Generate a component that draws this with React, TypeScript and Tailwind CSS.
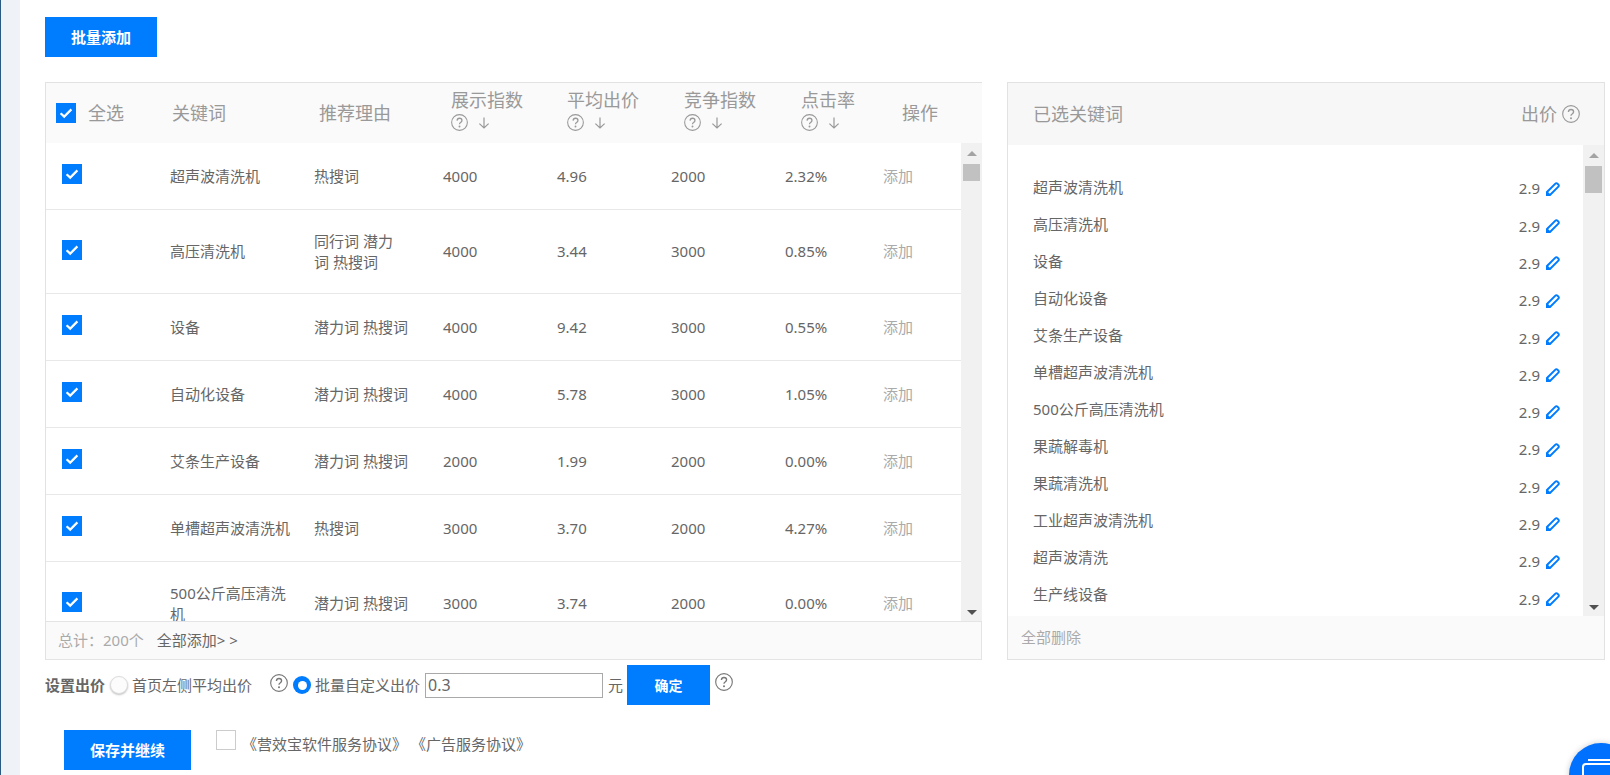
const FONT = "font-['Noto_Sans','Noto_Sans_CJK_SC','Liberation_Sans',sans-serif]";

function Check({ className }: { className: string }) {
  return (
    <span className={`flex h-5 w-5 items-center justify-center bg-[#007cff] ${className}`}>
      <svg width="14" height="12" viewBox="0 0 14 12" fill="none">
        <path d="M1.6 6.2 5.2 9.6 12.4 2.4" stroke="#fff" strokeWidth="2.2" />
      </svg>
    </span>
  );
}

function Help({ size = 17, color = "#999" }: { size?: number; color?: string }) {
  return (
    <svg width={size} height={size} viewBox="0 0 16 16" fill="none" className="shrink-0">
      <circle cx="8" cy="8" r="7.4" stroke={color} strokeWidth="1" />
      <path d="M5.7 6.2c.1-1.4 1-2.2 2.3-2.2 1.4 0 2.3.8 2.3 2 0 1-.6 1.5-1.3 2-.6.4-1 .8-1 1.6" stroke={color} strokeWidth="1.2" />
      <circle cx="8" cy="11.8" r=".9" fill={color} />
    </svg>
  );
}

function Down() {
  return (
    <svg width="12" height="12" viewBox="0 0 12 12" fill="none" className="shrink-0">
      <path d="M6 0.5V11M1.4 6.6 6 11 10.6 6.6" stroke="#999" strokeWidth="1.2" />
    </svg>
  );
}

function Pencil() {
  return (
    <svg width="14" height="14" viewBox="0 0 14 14" fill="none" className="shrink-0">
      <path d="M1 10 9.4 1.6a1.4 1.4 0 0 1 2 0l1 1a1.4 1.4 0 0 1 0 2L4 13H1Z" stroke="#007cff" strokeWidth="2" />
      <path d="M1.5 10.5 3.5 12.5" stroke="#007cff" strokeWidth="1.5" />
    </svg>
  );
}

function Scrollbar({ thumb, width }: { thumb: string; width: string }) {
  return (
    <div className={`relative flex shrink-0 flex-col items-center bg-[#f1f1f1] ${width}`}>
      <span className="mt-[8px] h-0 w-0 border-x-[5px] border-b-[5px] border-x-transparent border-b-[#a3a3a3]" />
      <span className={`mt-[8px] w-[17px] bg-[#c1c1c1] ${thumb}`} />
      <span className="mb-[6px] mt-auto h-0 w-0 border-x-[5px] border-t-[5px] border-x-transparent border-t-[#505050]" />
    </div>
  );
}

const rows = [
  { kw: ["超声波清洗机"], why: ["热搜词"], a: "4000", b: "4.96", c: "2000", d: "2.32%", h: "h-[67px]" },
  { kw: ["高压清洗机"], why: ["同行词 潜力", "词 热搜词"], a: "4000", b: "3.44", c: "3000", d: "0.85%", h: "h-[84px]" },
  { kw: ["设备"], why: ["潜力词 热搜词"], a: "4000", b: "9.42", c: "3000", d: "0.55%", h: "h-[67px]" },
  { kw: ["自动化设备"], why: ["潜力词 热搜词"], a: "4000", b: "5.78", c: "3000", d: "1.05%", h: "h-[67px]" },
  { kw: ["艾条生产设备"], why: ["潜力词 热搜词"], a: "2000", b: "1.99", c: "2000", d: "0.00%", h: "h-[67px]" },
  { kw: ["单槽超声波清洗机"], why: ["热搜词"], a: "3000", b: "3.70", c: "2000", d: "4.27%", h: "h-[67px]" },
  { kw: ["500公斤高压清洗", "机"], why: ["潜力词 热搜词"], a: "3000", b: "3.74", c: "2000", d: "0.00%", h: "h-[84px]" },
];

const selected = ["超声波清洗机", "高压清洗机", "设备", "自动化设备", "艾条生产设备", "单槽超声波清洗机", "500公斤高压清洗机", "果蔬解毒机", "果蔬清洗机", "工业超声波清洗机", "超声波清洗", "生产线设备"];

function Sortable({ label, className }: { label: string; className: string }) {
  return (
    <div className={`mb-[8px] flex flex-col gap-[3px] ${className}`}>
      <span className="leading-[24px]">{label}</span>
      <span className="flex h-4 items-center gap-[10px]">
        <Help />
        <Down />
      </span>
    </div>
  );
}

export default function App() {
  return (
    <div className={`flex h-[775px] w-[1610px] overflow-hidden bg-white text-[15px] text-[#666] ${FONT}`}>
      <div className="w-5 shrink-0 border-l border-l-[#2a5a84] bg-[#eff2f7]" />
      <main className="relative flex-1 pl-[25px] pr-[5px] pt-[17px]">
        <button className="h-10 w-[112px] bg-[#007cff] text-[15px] font-bold text-white">批量添加</button>

        <div className="mt-[25px] flex h-[578px] items-start justify-between">
          <section className="flex h-[578px] w-[937px] flex-col border-l border-t border-[#e2e2e2]">
            <header className="flex h-[60px] shrink-0 items-center bg-[#fafafa] text-[18px] text-[#999]">
              <Check className="ml-[10px]" />
              <span className="ml-3 w-[84px]">全选</span>
              <span className="w-[147px]">关键词</span>
              <span className="w-[132px]">推荐理由</span>
              <Sortable label="展示指数" className="w-[116px]" />
              <Sortable label="平均出价" className="w-[117px]" />
              <Sortable label="竞争指数" className="w-[117px]" />
              <Sortable label="点击率" className="w-[101px]" />
              <span>操作</span>
            </header>
            <div className="flex min-h-0 flex-1">
              <div className="min-w-0 flex-1 overflow-hidden">
                {rows.map((r, i) => (
                  <div key={i} className={`flex shrink-0 items-center border-b border-[#e8e8e8] ${r.h}`}>
                    <Check className="ml-4 mt-[-4px]" />
                    <div className="ml-[88px] w-[144px] leading-[21px]">
                      {r.kw.map((t) => (
                        <div key={t}>{t}</div>
                      ))}
                    </div>
                    <div className="w-[129px] leading-[21px]">
                      {r.why.map((t) => (
                        <div key={t}>{t}</div>
                      ))}
                    </div>
                    <span className="w-[114px]">{r.a}</span>
                    <span className="w-[114px]">{r.b}</span>
                    <span className="w-[114px]">{r.c}</span>
                    <span className="w-[98px]">{r.d}</span>
                    <span className="text-[#aaa]">添加</span>
                  </div>
                ))}
              </div>
              <Scrollbar thumb="h-[17px]" width="w-[21px]" />
            </div>
            <footer className="flex h-[39px] shrink-0 items-center border-b border-r border-t border-[#e4e4e4] bg-[#fafafa] pl-[12px] text-[#aaa]">
              <span>总计：200个</span>
              <span className="ml-[13px] text-[#666]">全部添加&gt; &gt;</span>
            </footer>
          </section>

          <section className="flex h-[578px] w-[598px] flex-col border border-[#e2e2e2]">
            <header className="flex h-[62px] shrink-0 items-center justify-between bg-[#f7f7f7] pl-[25px] pr-[24px] text-[18px] text-[#999]">
              <span>已选关键词</span>
              <span className="flex items-center gap-[5px]">
                出价
                <Help size={18} />
              </span>
            </header>
            <div className="flex min-h-0 flex-1">
              <div className="flex min-w-0 flex-1 overflow-hidden pl-[25px] pr-[23px] pt-[24px]">
                <div className="flex-1">
                  {selected.map((s) => (
                    <div key={s} className="h-[37px] leading-[37px]">
                      {s}
                    </div>
                  ))}
                </div>
                <div className="mt-[1px]">
                  {selected.map((s) => (
                    <div key={s} className="flex h-[37.3px] items-center gap-[6px]">
                      2.9
                      <Pencil />
                    </div>
                  ))}
                </div>
              </div>
              <Scrollbar thumb="h-[27px]" width="w-[21px]" />
            </div>
            <footer className="flex h-[43px] shrink-0 items-center bg-[#fafafa] pl-[13px] text-[15px] text-[#aaa]">全部删除</footer>
          </section>
        </div>

        <div className="mt-[5px] flex h-10 items-center">
          <span className="font-bold">设置出价</span>
          <span className="ml-[5px] h-[18px] w-[18px] rounded-full border border-[#ddd] bg-[#fcfcfc] shadow-[0_1px_2px_rgba(0,0,0,0.25)]" />
          <span className="ml-[4px]">首页左侧平均出价</span>
          <span className="ml-[18px] mt-[-4px]">
            <Help size={18} color="#777" />
          </span>
          <span className="ml-[5px] flex h-[18px] w-[18px] items-center justify-center rounded-full bg-[#007cff]">
            <span className="h-[9px] w-[9px] rounded-full bg-white" />
          </span>
          <span className="ml-[4px]">批量自定义出价</span>
          <input
            readOnly
            value="0.3"
            className="ml-[5px] h-[25px] w-[178px] border border-[#a9a9a9] px-[2px] text-[16px] text-[#666] outline-none"
          />
          <span className="ml-[5px]">元</span>
          <button className="ml-[4px] h-10 w-[83px] bg-[#007cff] text-[14px] font-bold text-white">确定</button>
          <span className="ml-[5px] mt-[-6px]">
            <Help size={18} color="#777" />
          </span>
        </div>

        <div className="ml-[19px] mt-[25px] flex items-start">
          <button className="h-10 w-[127px] bg-[#007cff] text-[15px] font-bold text-white">保存并继续</button>
          <span className="ml-[25px] h-5 w-5 border border-[#ccc]" />
          <span className="ml-[6px] mt-[4px] whitespace-nowrap text-[15px] leading-[20px]">《营效宝软件服务协议》 《广告服务协议》</span>
        </div>

        <div className="absolute left-[1549px] top-[743px] h-16 w-16 rounded-full bg-[#0070ff] shadow-[0_0_6px_rgba(0,0,0,0.2)]">
          <span className="absolute left-[13px] top-[20px] h-[30px] w-[36px] rounded-[4px] border-2 border-white" />
          <span className="absolute left-[19px] top-[16px] h-[2px] w-[30px] bg-white" />
        </div>
      </main>
    </div>
  );
}
